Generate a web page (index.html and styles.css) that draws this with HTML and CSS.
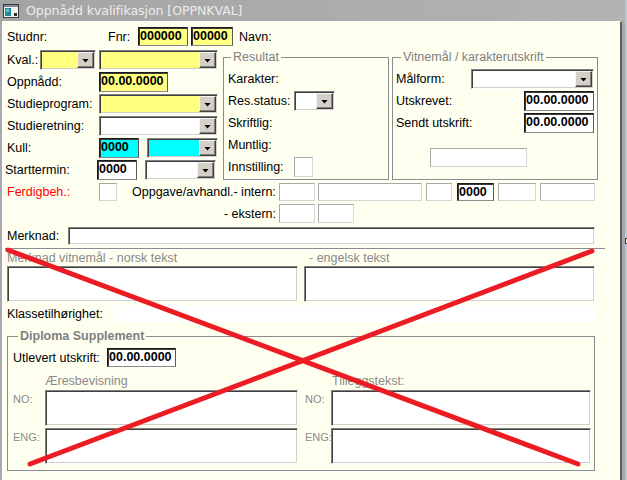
FILE: index.html
```html
<!DOCTYPE html>
<html lang="no">
<head>
<meta charset="utf-8">
<title>Oppnådd kvalifikasjon</title>
<link rel="stylesheet" href="styles.css">
</head>
<body>
<div class="window">
  <div class="titlebar">
    <svg class="appicon" viewBox="0 0 16 14" width="16" height="14">
      <rect x="0.5" y="0.5" width="15" height="13" fill="#f2f2f2" stroke="#3a3a3a"/>
      <rect x="1" y="1" width="14" height="2" fill="#7d8a96"/>
      <rect x="2" y="4" width="6" height="8" fill="#1d8c98"/>
      <rect x="3" y="5" width="3" height="3" fill="#6cc3c9"/>
      <rect x="11" y="9" width="3" height="3" fill="#2e2e2e"/>
    </svg>
    <span class="title">Oppnådd kvalifikasjon [OPPNKVAL]</span>
  </div>

  <div class="client">
    <div class="row r-stud">
      <span class="lbl w101">Studnr:</span>
      <span class="lbl w30">Fnr:</span>
      <span class="fld val yel w50">000000</span>
      <span class="fld val yel w42 ml3">00000</span>
      <span class="lbl ml6">Navn:</span>
    </div>

    <div class="top">
      <div class="leftcol">
        <div class="row h20"><span class="lbl w33">Kval.:</span><span class="sel yel w56"><i class="btn"></i></span><span class="sel yel w119 ml3"><i class="btn"></i></span></div>
        <div class="row h20"><span class="lbl w92">Oppnådd:</span><span class="fld val yel w69">00.00.0000</span></div>
        <div class="row h20"><span class="lbl w92">Studieprogram:</span><span class="sel yel w119"><i class="btn"></i></span></div>
        <div class="row h20"><span class="lbl w92">Studieretning:</span><span class="sel w119"><i class="btn"></i></span></div>
        <div class="row h20"><span class="lbl w92">Kull:</span><span class="fld val cyan w40">0000</span><span class="sel cyan w71 ml8"><i class="btn"></i></span></div>
        <div class="row h20"><span class="lbl w92 lshift">Starttermin:</span><span class="fld val w40">0000</span><span class="sel w71 ml8"><i class="btn"></i></span></div>
      </div>

      <fieldset class="grp res">
        <legend>Resultat</legend>
        <div class="frows">
          <div class="row h20"><span class="lbl">Karakter:</span></div>
          <div class="row h20"><span class="lbl w66">Res.status:</span><span class="sel w41"><i class="btn"></i></span></div>
          <div class="row h20"><span class="lbl">Skriftlig:</span></div>
          <div class="row h20"><span class="lbl">Muntlig:</span></div>
          <div class="row h20"><span class="lbl w66">Innstilling:</span><span class="fld flat w19"></span></div>
        </div>
      </fieldset>

      <fieldset class="grp vit">
        <legend>Vitnemål / karakterutskrift</legend>
        <div class="frows">
          <div class="row h20 spread"><span class="lbl">Målform:</span><span class="sel w123"><i class="btn"></i></span></div>
          <div class="row h20 spread"><span class="lbl">Utskrevet:</span><span class="fld val w70">00.00.0000</span></div>
          <div class="row h20 spread"><span class="lbl">Sendt utskrift:</span><span class="fld val w70">00.00.0000</span></div>
        </div>
        <div class="fld flat w97 blank"></div>
      </fieldset>
    </div>

    <div class="row r-ferd">
      <span class="lbl w92 red">Ferdigbeh.:</span>
      <span class="fld flat w18"></span>
      <span class="lbl w147 ml15">Oppgave/avhandl.- intern:</span>
      <span class="fld flat w36"></span>
      <span class="fld flat w104 ml3"></span>
      <span class="fld flat w26 ml4"></span>
      <span class="fld val w37 ml5">0000</span>
      <span class="fld flat w38 ml4"></span>
      <span class="fld flat w55 ml4"></span>
    </div>

    <div class="row r-ekst">
      <span class="lbl w272 right">- ekstern:</span>
      <span class="fld flat w36"></span>
      <span class="fld flat w36 ml3"></span>
    </div>

    <div class="row r-merk">
      <span class="lbl w61">Merknad:</span>
      <span class="fld sunk w527"></span>
    </div>

    <div class="sep"></div>

    <div class="row r-mtitle">
      <span class="lbl gray w297">Merknad vitnemål - norsk tekst</span>
      <span class="lbl gray pl5">- engelsk tekst</span>
    </div>
    <div class="row r-marea">
      <span class="area w291"></span>
      <span class="area w291 ml6"></span>
    </div>

    <div class="row r-klasse">
      <span class="lbl w106">Klassetilhørighet:</span>
      <span class="ghost w482"></span>
    </div>

    <fieldset class="grp dip">
      <legend>Diploma Supplement</legend>
      <div class="row r-utlev">
        <span class="lbl w94">Utlevert utskrift:</span>
        <span class="fld val w69">00.00.0000</span>
      </div>
      <div class="row r-dhead">
        <span class="lbl gray w319 pl32">Æresbevisning</span>
        <span class="lbl gray">Tilleggstekst:</span>
      </div>
      <div class="dgrid">
        <span class="small">NO:</span><span class="area"></span><span></span><span class="small">NO:</span><span class="area"></span>
        <span class="small">ENG:</span><span class="area"></span><span></span><span class="small">ENG:</span><span class="area"></span>
      </div>
    </fieldset>
  </div>

  <svg class="cross" width="625" height="480" viewBox="0 0 625 480">
    <line x1="8" y1="250" x2="578" y2="464" stroke="#ec1c24" stroke-width="5" stroke-linecap="round"/>
    <line x1="592" y1="251" x2="30" y2="464" stroke="#ec1c24" stroke-width="5" stroke-linecap="round"/>
  </svg>
</div>
<div class="strip"><span class="tick"></span></div>
</body>
</html>
```

FILE: styles.css
```css
* { box-sizing: border-box; }
html, body { margin: 0; padding: 0; }
body {
  width: 627px; height: 480px; overflow: hidden;
  display: flex;
  background: #b9c6da;
  font-family: "Liberation Sans", Arial, sans-serif;
  font-size: 12.5px; color: #000;
}
.window {
  position: relative;
  width: 625px; height: 480px; flex: none;
  background: #a9a9a9;
  display: flex; flex-direction: column;
}
.strip { flex: 1; display: flex; flex-direction: column; }
.tick { margin-top: 238px; width: 2px; height: 6px; background: #fff; border: 1px solid #333; border-right: 0; }

.titlebar {
  height: 21px; flex: none;
  display: flex; align-items: center;
  padding-left: 3px;
  background: linear-gradient(90deg, #a4a4a4, #b3b3b3);
}
.appicon { display: block; }
.title { margin-left: 7px; color: #ececec; font-family: "DejaVu Sans", sans-serif; font-size: 12.6px; letter-spacing: -0.1px; }

.client {
  flex: 1;
  margin: 0 3px 0 2px;
  background: #fffff0;
  border-left: 1px solid #fff;
  border-top: 1px solid #fff;
  border-right: 2px solid #5e5e5e;
  padding: 5px 0 0 4px;
  display: flex; flex-direction: column; align-items: flex-start;
}

.row { display: flex; align-items: center; flex: none; }
.h20 { height: 20px; }
.lbl { white-space: nowrap; flex: none; }
.right { text-align: right; padding-right: 3px; }
.red { color: #ff0000; }
.gray { color: #8a8a8a; }
.lshift { margin-left: -2px; width: 94px; }

/* widths */
.w18 { width: 18px; } .w19 { width: 19px; } .w26 { width: 26px; } .w30 { width: 30px; }
.w33 { width: 33px; } .w36 { width: 36px; } .w37 { width: 37px; } .w38 { width: 38px; }
.w40 { width: 40px; } .w41 { width: 41px; } .w42 { width: 42px; } .w50 { width: 50px; }
.w55 { width: 55px; } .w56 { width: 56px; } .w61 { width: 61px; } .w66 { width: 66px; }
.w69 { width: 69px; } .w70 { width: 70px; } .w71 { width: 71px; } .w92 { width: 92px; }
.w94 { width: 94px; } .w97 { width: 97px; } .w101 { width: 101px; } .w104 { width: 104px; }
.w106 { width: 106px; } .w119 { width: 119px; } .w123 { width: 123px; } .w147 { width: 147px; }
.w272 { width: 272px; } .w291 { width: 291px; } .w297 { width: 297px; } .w319 { width: 319px; }
.w482 { width: 482px; } .w527 { width: 527px; }
.ml3 { margin-left: 3px; } .ml4 { margin-left: 4px; } .ml5 { margin-left: 5px; } .ml6 { margin-left: 6px; }
.ml8 { margin-left: 8px; } .ml15 { margin-left: 15px; }
.pl5 { padding-left: 5px; } .pl32 { padding-left: 32px; }

/* fields */
.fld { display: block; flex: none; height: 100%; background: #fff; }
.val {
  font-weight: bold; line-height: 16px; padding-left: 1px; white-space: nowrap; overflow: hidden;
  border: 1px solid; border-color: #1a1a1a #5a5a5a #8a8a8a #1a1a1a;
  box-shadow: inset 1px 1px 0 #3a3a3a;
}
.flat { border: 1px solid; border-color: #a8a8a8 #d6d6d6 #d6d6d6 #a8a8a8; }
.sunk, .sel, .area {
  border: 1px solid; border-color: #808080 #fff #fff #808080;
  box-shadow: inset 1px 1px 0 #404040, inset -1px -1px 0 #d4d0c8;
  background: #fff;
}
.yel { background: #ffff80; }
.cyan { background: #00ffff; }

.sel { display: flex; justify-content: flex-end; height: 100%; flex: none; padding: 1px; }
.btn {
  width: 17px; height: 100%;
  background: #d4d0c8;
  border: 1px solid; border-color: #f4f4f4 #404040 #404040 #f4f4f4;
  box-shadow: inset -1px -1px 0 #808080;
  display: flex; align-items: center; justify-content: center;
}
.btn::after {
  content: ""; width: 7px; height: 4px; background: #000;
  clip-path: polygon(0 0, 100% 0, 50% 100%);
  margin-top: 1px;
}

.r-stud { height: 19px; }
.top { display: flex; margin-top: 4px; height: 130px; flex: none; }
.leftcol { width: 211px; flex: none; display: flex; flex-direction: column; gap: 2px; }

.grp {
  margin: 0; min-width: 0; flex: none;
  border: 1px solid #8c8c8c;
  box-shadow: 1px 1px 0 #fff;
}
.grp legend {
  color: #808080; line-height: 14px; padding: 0 2px;
}
.res { width: 166px; height: 130px; margin-left: 5px; padding: 0 3px 0 4px; }
.res legend { margin-left: 3px; }
.vit { width: 206px; height: 130px; margin-left: 3px; padding: 0 3px 0 3px; }
.vit legend { margin-left: 5px; }
.frows { display: flex; flex-direction: column; gap: 2px; margin-top: 5px; }
.spread { justify-content: space-between; }
.blank { height: 19px; margin: 15px 0 0 34px; }

.r-ferd { height: 18px; margin-top: 3px; }
.r-ekst { height: 19px; margin-top: 3px; }
.r-merk { height: 18px; margin-top: 4px; }
.sep { margin: 3px 0 0 -2px; width: 600px; height: 2px; border-top: 1px solid #8c8c8c; border-bottom: 1px solid #fff; flex: none; }

.r-mtitle { height: 14px; margin-top: 1px; }
.r-marea { height: 36px; margin-top: 1px; }
.area { display: block; height: 100%; flex: none; }
.r-klasse { height: 17px; margin-top: 3px; }
.ghost { display: block; height: 100%; background: #fff; }

.dip { width: 588px; height: 142px; margin-top: 7px; padding: 0 0 0 5px; }
.dip legend { font-weight: bold; margin-left: 5px; }
.r-utlev { height: 19px; margin-top: 5px; }
.r-dhead { height: 14px; margin-top: 7px; }
.dgrid {
  margin-top: 2px;
  display: grid;
  grid-template-columns: 32px 253px 7px 26px 260px;
  grid-template-rows: 36px 36px;
  row-gap: 2px;
}
.small { font-size: 11px; color: #8a8a8a; padding-top: 3px; }

.cross { position: absolute; left: 0; top: 0; pointer-events: none; }
```
